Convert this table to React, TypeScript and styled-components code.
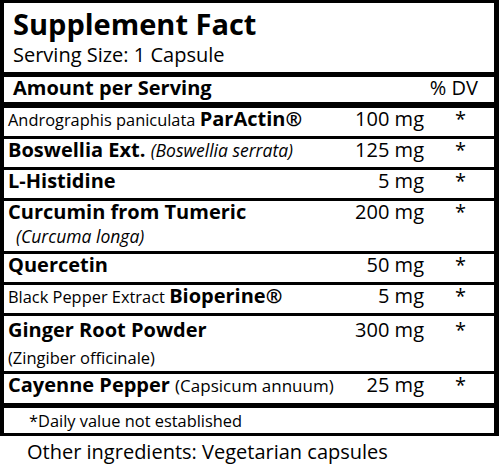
import React from "react";
import styled, { createGlobalStyle } from "styled-components";

const Global = createGlobalStyle`
  html, body { margin: 0; padding: 0; background: #fff; }
  body { font-family: "Open Sans", "Noto Sans", sans-serif; color: #000; }
`;

const Page = styled.div`
  width: 500px;
  height: 464px;
  background: #fff;
  overflow: hidden;
`;

const Label = styled.div`
  width: 499px;
  box-sizing: border-box;
  border-style: solid;
  border-color: #000;
  border-width: 3px 5px 3px 4px;
  display: flex;
  flex-direction: column;
`;

const TitleBlock = styled.div`
  padding: 3px 0 4px 9px;
  border-bottom: 5px solid #000;
`;

const Title = styled.h1`
  margin: 0;
  font-size: 29px;
  font-weight: 700;
  line-height: 36px;
`;

const Serving = styled.div`
  font-size: 20px;
  line-height: 26px;
`;

const HeaderRow = styled.div`
  display: flex;
  justify-content: space-between;
  padding: 0 16px 4px 9px;
  font-size: 20px;
  line-height: 21px;
  border-bottom: 6px solid #000;
`;

const Bold = styled.span`
  font-weight: 700;
`;

const Light = styled.span<{ $size?: number; $italic?: boolean }>`
  font-weight: 400;
  font-size: ${(p) => p.$size ?? 16.4}px;
  font-style: ${(p) => (p.$italic ? "italic" : "normal")};
  line-height: 1;
`;

const Rows = styled.div`
  display: flex;
  flex-direction: column;
`;

const Row = styled.div<{ $pt?: number; $pb?: number }>`
  display: grid;
  grid-template-columns: minmax(0, 1fr) 100px 70px;
  padding: ${(p) => p.$pt ?? 0}px 0 ${(p) => p.$pb ?? 6}px 4px;
  font-size: 20px;
  line-height: 22px;
  & + & {
    border-top: 3px solid #000;
  }
`;

const Name = styled.div`
  white-space: nowrap;
`;

const SubLine = styled.div<{ $mt?: number; $lh?: number; $indent?: number; $italic?: boolean; $size?: number }>`
  margin-top: ${(p) => p.$mt ?? 0}px;
  line-height: ${(p) => p.$lh ?? 22}px;
  padding-left: ${(p) => p.$indent ?? 0}px;
  font-size: ${(p) => p.$size ?? 16}px;
  font-style: ${(p) => (p.$italic ? "italic" : "normal")};
`;

const Amount = styled.div`
  text-align: right;
`;

const DV = styled.div`
  text-align: center;
  padding-left: 3px;
`;

const Footnote = styled.div`
  border-top: 5px solid #000;
  padding: 1px 0 0 25px;
  font-size: 16.4px;
  line-height: 24px;
`;

const Other = styled.div`
  margin-top: 5px;
  padding-left: 27px;
  font-size: 20px;
  line-height: 22px;
`;

export default function App() {
  return (
    <Page>
      <Global />
      <Label>
        <TitleBlock>
          <Title>Supplement Fact</Title>
          <Serving>Serving Size: 1 Capsule</Serving>
        </TitleBlock>
        <HeaderRow>
          <Bold>Amount per Serving</Bold>
          <span>% DV</span>
        </HeaderRow>
        <Rows>
          <Row>
            <Name>
              <Light>Andrographis paniculata </Light>
              <Bold>ParActin®</Bold>
            </Name>
            <Amount>100 mg</Amount>
            <DV>*</DV>
          </Row>
          <Row>
            <Name>
              <Bold>Boswellia Ext. </Bold>
              <Light $italic $size={17.5}>(Boswellia serrata)</Light>
            </Name>
            <Amount>125 mg</Amount>
            <DV>*</DV>
          </Row>
          <Row>
            <Name>
              <Bold>L-Histidine</Bold>
            </Name>
            <Amount>5 mg</Amount>
            <DV>*</DV>
          </Row>
          <Row $pb={4}>
            <Name>
              <Bold>Curcumin from Tumeric</Bold>
              <SubLine $italic $indent={8} $size={17.5} $mt={3} $lh={21}>
                (Curcuma longa)
              </SubLine>
            </Name>
            <Amount>200 mg</Amount>
            <DV>*</DV>
          </Row>
          <Row>
            <Name>
              <Bold>Quercetin</Bold>
            </Name>
            <Amount>50 mg</Amount>
            <DV>*</DV>
          </Row>
          <Row>
            <Name>
              <Light>Black Pepper Extract </Light>
              <Bold>Bioperine®</Bold>
            </Name>
            <Amount>5 mg</Amount>
            <DV>*</DV>
          </Row>
          <Row $pt={3} $pb={0}>
            <Name>
              <Bold>Ginger Root Powder</Bold>
              <SubLine $mt={4} $lh={26} $size={16.5}>(Zingiber officinale)</SubLine>
            </Name>
            <Amount>300 mg</Amount>
            <DV>*</DV>
          </Row>
          <Row $pb={7}>
            <Name>
              <Bold>Cayenne Pepper </Bold>
              <Light $size={17}>(Capsicum annuum)</Light>
            </Name>
            <Amount>25 mg</Amount>
            <DV>*</DV>
          </Row>
        </Rows>
        <Footnote>*Daily value not established</Footnote>
      </Label>
      <Other>Other ingredients: Vegetarian capsules</Other>
    </Page>
  );
}
